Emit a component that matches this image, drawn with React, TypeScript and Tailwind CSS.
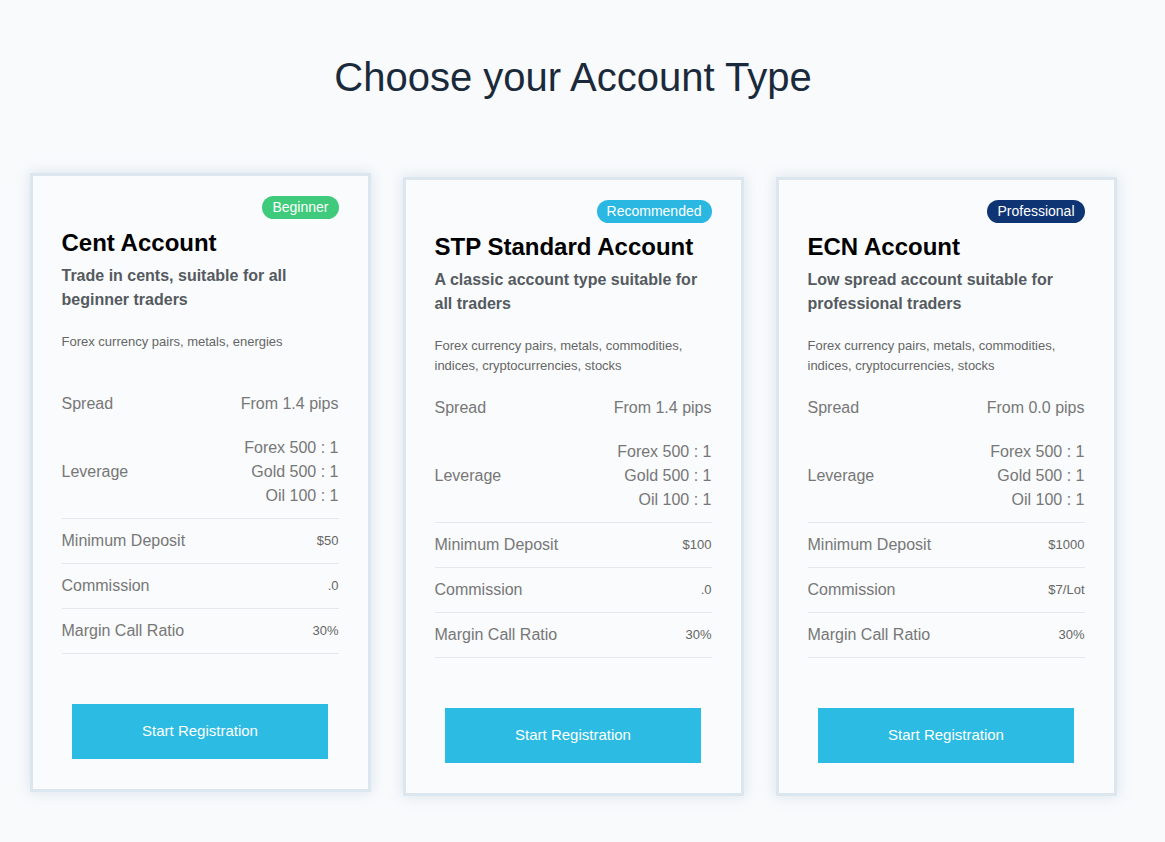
const cuentas = [
  {
    badge: 'Beginner',
    badgeClass: 'bg-[#3fcb7b]',
    titulo: 'Cent Account',
    subtitulo: 'Trade in cents, suitable for all beginner traders',
    descripcion: 'Forex currency pairs, metals, energies',
    spread: 'From 1.4 pips',
    leverage: ['Forex 500 : 1', 'Gold 500 : 1', 'Oil 100 : 1'],
    deposito: '$50',
    comision: '.0',
    margen: '30%',
    elevada: true,
  },
  {
    badge: 'Recommended',
    badgeClass: 'bg-[#2ab8e3]',
    titulo: 'STP Standard Account',
    subtitulo: 'A classic account type suitable for all traders',
    descripcion: 'Forex currency pairs, metals, commodities, indices, cryptocurrencies, stocks',
    spread: 'From 1.4 pips',
    leverage: ['Forex 500 : 1', 'Gold 500 : 1', 'Oil 100 : 1'],
    deposito: '$100',
    comision: '.0',
    margen: '30%',
    elevada: false,
  },
  {
    badge: 'Professional',
    badgeClass: 'bg-[#0f3473]',
    titulo: 'ECN Account',
    subtitulo: 'Low spread account suitable for professional traders',
    descripcion: 'Forex currency pairs, metals, commodities, indices, cryptocurrencies, stocks',
    spread: 'From 0.0 pips',
    leverage: ['Forex 500 : 1', 'Gold 500 : 1', 'Oil 100 : 1'],
    deposito: '$1000',
    comision: '$7/Lot',
    margen: '30%',
    elevada: false,
  },
]

type Cuenta = (typeof cuentas)[number]

function Fila({ label, valor, borde = true }: { label: string; valor: string; borde?: boolean }) {
  return (
    <div
      className={`flex items-center justify-between py-[10px] leading-6 ${borde ? 'border-b border-[#e2e8ec]' : ''}`}
    >
      <span className="text-base text-[#777]">{label}</span>
      <span className="text-[13px] text-[#666]">{valor}</span>
    </div>
  )
}

function Tarjeta({ cuenta }: { cuenta: Cuenta }) {
  return (
    <div
      className={`flex w-[341px] flex-col border-[3px] border-[#dce6ee] bg-[#f9fbfc] px-[29px] pt-[20px] pb-[30px] shadow-[0_0_12px_rgba(180,200,215,0.45)] ${
        cuenta.elevada ? '-translate-y-1' : ''
      }`}
    >
      <div className="flex justify-end">
        <span
          className={`h-[23px] rounded-full px-[10px] text-sm leading-[23px] text-white ${cuenta.badgeClass}`}
        >
          {cuenta.badge}
        </span>
      </div>
      <h2 className="mt-[9px] text-[24px] leading-[30px] font-bold text-black">{cuenta.titulo}</h2>
      <p className="mt-[6px] text-base leading-6 font-bold text-[#555a60]">{cuenta.subtitulo}</p>
      <p className="mt-5 min-h-[40px] text-[13px] leading-5 text-[#666]">{cuenta.descripcion}</p>

      <div className="mt-[10px]">
        <div className="flex items-center justify-between py-[10px] text-base leading-6 text-[#777]">
          <span>Spread</span>
          <span>{cuenta.spread}</span>
        </div>
        <div className="flex items-center justify-between border-b border-[#e2e8ec] py-[10px] text-base leading-6 text-[#777]">
          <span>Leverage</span>
          <div className="text-right">
            {cuenta.leverage.map((l) => (
              <div key={l}>{l}</div>
            ))}
          </div>
        </div>
        <Fila label="Minimum Deposit" valor={cuenta.deposito} />
        <Fila label="Commission" valor={cuenta.comision} />
        <Fila label="Margin Call Ratio" valor={cuenta.margen} />
      </div>

      <button
        type="button"
        className="mx-auto mt-[50px] h-[55px] w-[256px] bg-[#2bbbe3] text-[15px] text-white"
      >
        Start Registration
      </button>
    </div>
  )
}

export default function App() {
  return (
    <div className="min-h-[842px] bg-[#f8fafc] font-['Liberation_Sans',Arial,sans-serif]">
      <div className="w-[1146px] pt-[54px]">
        <h1 className="text-center text-[40px] leading-[46px] text-[#1b2a3b]">Choose your Account Type</h1>
        <div className="mt-[77px] flex items-start justify-center gap-[32px]">
          {cuentas.map((c) => (
            <Tarjeta key={c.titulo} cuenta={c} />
          ))}
        </div>
      </div>
    </div>
  )
}
